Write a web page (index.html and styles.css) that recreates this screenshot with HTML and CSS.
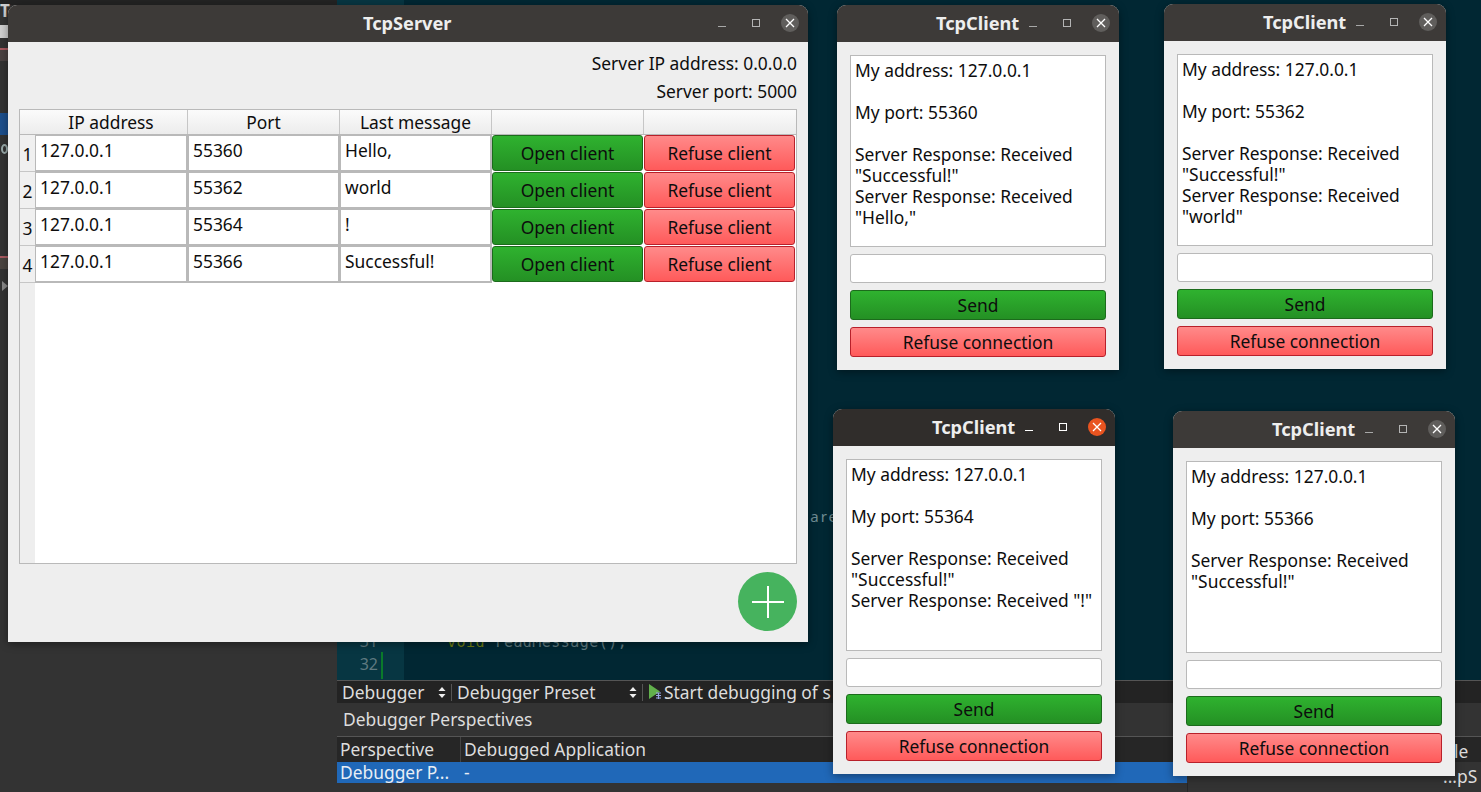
FILE: index.html
```html
<!DOCTYPE html>
<html lang="en">
<head>
<meta charset="utf-8">
<title>TcpServer</title>
<link rel="stylesheet" href="styles.css">
</head>
<body>
<div class="desktop">
  <div class="ide-left">
    <div class="top-strip"></div>
    <span class="ide-t">T</span>
    <span class="side-box"></span>
    <span class="side-red"></span>
    <span class="side-blue"></span>
    <span class="side-circle"></span>
    <span class="side-lock"></span>
    <span class="side-arrow"></span>
  </div>
  <div class="ide-right">
    <div class="editor">
      <div class="gutter"><span class="ln ln31">31</span><span class="ln ln32">32</span></div>
      <div class="code"><span class="frag">pare</span><span class="codeline"><span class="kw">void</span> readMessage();</span></div>
    </div>
    <div class="toolbar">
      <span class="combo c1"><span class="clip">Debugger</span><svg class="updown" width="8" height="11" viewBox="0 0 8 11"><path d="M4 0L7.5 4H.5ZM4 11L.5 7H7.5Z" fill="#eee"/></svg></span>
      <span class="combo c2"><span class="clip">Debugger Preset</span><svg class="updown" width="8" height="11" viewBox="0 0 8 11"><path d="M4 0L7.5 4H.5ZM4 11L.5 7H7.5Z" fill="#eee"/></svg></span>
      <svg class="play" width="13" height="16" viewBox="0 0 13 16"><path d="M0 0L11 7.5L0 15Z" fill="#62b04c"/><path d="M7 9h5M7 11.5h5M7 14h5M9.5 9v6" stroke="#9aa8e6" stroke-width="1.2"/></svg>
      <span class="clip start">Start debugging of s</span>
    </div>
    <div class="persp-title">Debugger Perspectives</div>
    <div class="persp-head"><span class="ph1">Perspective</span><span class="ph2">Debugged Application</span></div>
    <div class="persp-row"><span class="ph1">Debugger P...</span><span class="ph2">-</span></div>
    <div class="persp-foot"></div>
    <div class="far-head">le</div>
    <div class="far-row">...pS</div>
  </div>

  <section class="win server">
    <header class="bar">
      <span class="title server-title">TcpServer</span>
      <span class="ctl min"></span><span class="ctl max"></span>
      <span class="close"><svg width="10" height="10" viewBox="0 0 10 10"><path d="M1 1L9 9M9 1L1 9" stroke="#fff" stroke-width="1.3"/></svg></span>
    </header>
    <div class="server-body">
      <div class="info">Server IP address: 0.0.0.0</div>
      <div class="info">Server port: 5000</div>
      <div class="table">
        <div class="thead">
          <div class="corner"></div>
          <div class="th w-ip">IP address</div>
          <div class="th w-port">Port</div>
          <div class="th w-msg">Last message</div>
          <div class="th w-btn"></div>
          <div class="th w-btn last"></div>
        </div>
        <div class="tbody">
          <div class="vhead">
            <div class="vh">1</div><div class="vh">2</div><div class="vh">3</div><div class="vh">4</div><div class="vh-rest"></div>
          </div>
          <div class="rows">
            <div class="row"><div class="cell w-ip">127.0.0.1</div><div class="cell w-port">55360</div><div class="cell w-msg">Hello,</div><button class="btn green tb">Open client</button><button class="btn red tb">Refuse client</button></div>
            <div class="row"><div class="cell w-ip">127.0.0.1</div><div class="cell w-port">55362</div><div class="cell w-msg">world</div><button class="btn green tb">Open client</button><button class="btn red tb">Refuse client</button></div>
            <div class="row"><div class="cell w-ip">127.0.0.1</div><div class="cell w-port">55364</div><div class="cell w-msg">!</div><button class="btn green tb">Open client</button><button class="btn red tb">Refuse client</button></div>
            <div class="row"><div class="cell w-ip">127.0.0.1</div><div class="cell w-port">55366</div><div class="cell w-msg">Successful!</div><button class="btn green tb">Open client</button><button class="btn red tb">Refuse client</button></div>
          </div>
        </div>
      </div>
      <div class="fab-row">
        <span class="fab"><svg width="32" height="32" viewBox="0 0 32 32"><path d="M16 0V32M0 16H32" stroke="#fff" stroke-width="2"/></svg></span>
      </div>
    </div>
  </section>

  <section class="win client c-a">
    <header class="bar"><span class="title">TcpClient</span><span class="ctl min"></span><span class="ctl max"></span><span class="close"><svg width="10" height="10" viewBox="0 0 10 10"><path d="M1 1L9 9M9 1L1 9" stroke="#fff" stroke-width="1.3"/></svg></span></header>
    <div class="client-body">
      <div class="log">My address: 127.0.0.1<br><br>My port: 55360<br><br>Server Response: Received<br>"Successful!"<br>Server Response: Received<br>"Hello,"</div>
      <div class="input"></div>
      <button class="btn green wide">Send</button>
      <button class="btn red wide">Refuse connection</button>
    </div>
  </section>

  <section class="win client c-b">
    <header class="bar"><span class="title">TcpClient</span><span class="ctl min"></span><span class="ctl max"></span><span class="close"><svg width="10" height="10" viewBox="0 0 10 10"><path d="M1 1L9 9M9 1L1 9" stroke="#fff" stroke-width="1.3"/></svg></span></header>
    <div class="client-body">
      <div class="log">My address: 127.0.0.1<br><br>My port: 55362<br><br>Server Response: Received<br>"Successful!"<br>Server Response: Received<br>"world"</div>
      <div class="input"></div>
      <button class="btn green wide">Send</button>
      <button class="btn red wide">Refuse connection</button>
    </div>
  </section>

  <section class="win client c-c active">
    <header class="bar"><span class="title">TcpClient</span><span class="ctl min"></span><span class="ctl max"></span><span class="close"><svg width="10" height="10" viewBox="0 0 10 10"><path d="M1 1L9 9M9 1L1 9" stroke="#fff" stroke-width="1.3"/></svg></span></header>
    <div class="client-body">
      <div class="log">My address: 127.0.0.1<br><br>My port: 55364<br><br>Server Response: Received<br>"Successful!"<br>Server Response: Received "!"</div>
      <div class="input"></div>
      <button class="btn green wide">Send</button>
      <button class="btn red wide">Refuse connection</button>
    </div>
  </section>

  <section class="win client c-d">
    <header class="bar"><span class="title">TcpClient</span><span class="ctl min"></span><span class="ctl max"></span><span class="close"><svg width="10" height="10" viewBox="0 0 10 10"><path d="M1 1L9 9M9 1L1 9" stroke="#fff" stroke-width="1.3"/></svg></span></header>
    <div class="client-body">
      <div class="log">My address: 127.0.0.1<br><br>My port: 55366<br><br>Server Response: Received<br>"Successful!"</div>
      <div class="input"></div>
      <button class="btn green wide">Send</button>
      <button class="btn red wide">Refuse connection</button>
    </div>
  </section>
</div>
</body>
</html>
```
FILE: styles.css
```css
* { box-sizing: border-box; }
html, body { margin: 0; padding: 0; height: 100%; overflow: hidden; }
body { font-family: "Noto Sans", "Open Sans", sans-serif; font-size: 17.4px; color: #0d0d0d; }
.desktop { position: relative; width: 1481px; height: 792px; background: #333; overflow: hidden; }

.ide-left { position: absolute; left: 0; top: 0; width: 337px; height: 792px; background: #333; }
.top-strip { height: 5px; background: #232323; }
.ide-t { position: absolute; left: 0; top: 1px; color: #cfcfcf; font-weight: 700; font-size: 17px; line-height: 20px; }
.side-box { position: absolute; left: 0; top: 25px; width: 8px; height: 13px; background: #d0d0d0; }
.side-red { position: absolute; left: 0; top: 48px; width: 8px; height: 13px; background: #4a4242; border-top: 2px solid #a85a60; }
.side-blue { position: absolute; left: 0; top: 113px; width: 8px; height: 22px; background: #1d4f8c; }
.side-circle { position: absolute; left: 1px; top: 144px; width: 7px; height: 10px; border-radius: 50%; border: 2px solid #9aa; }
.side-lock { position: absolute; left: 0; top: 256px; width: 8px; height: 13px; background: #4a4440; border-top: 2px solid #a85a60; }
.side-arrow { position: absolute; left: 2px; top: 281px; border-left: 6px solid #888; border-top: 5px solid transparent; border-bottom: 5px solid transparent; }

.ide-right { position: absolute; left: 337px; top: 0; width: 1144px; height: 792px; display: flex; flex-direction: column; background: #333; }
.editor { height: 681px; flex: none; display: flex; background: #012733; border-bottom: 1px solid #555; position: relative; }
.gutter { width: 67px; background: #073642; position: relative; }
.ln { position: absolute; right: 26px; color: #5f7a80; font-size: 16px; line-height: 22px; }
.ln31 { top: 630px; }
.ln32 { top: 653px; }
.ln32::after { content: ""; position: absolute; left: 21px; top: -1px; width: 2px; height: 27px; background: #0a7a2a; }
.code { flex: 1; position: relative; }
.frag { position: absolute; left: 395px; top: 506px; color: #6f8b92; font-size: 15px; letter-spacing: 2px; }
.codeline { position: absolute; left: 43px; top: 633px; color: #5f7a80; font-size: 15px; font-family: "DejaVu Sans Mono", monospace; letter-spacing: .45px; }
.kw { color: #6b7a12; }
.toolbar { height: 22px; flex: none; background: #232323; display: flex; align-items: center; color: #ddd; white-space: nowrap; }
.combo { display: flex; align-items: center; justify-content: space-between; padding: 0 5px; height: 17px; border-right: 1px solid #555; flex: none; }
.clip { display: block; line-height: 17px; }
.c1 { width: 115px; }
.c2 { width: 191px; }
.play { margin-left: 6px; flex: none; }
.start { margin-left: 2px; }
.persp-title { height: 34px; flex: none; color: #ddd; padding: 0 6px; line-height: 33px; border-bottom: 1px solid #555; }
.persp-head { height: 25px; flex: none; background: #262626; color: #ddd; display: flex; line-height: 24px; }
.persp-row { height: 21px; flex: none; background: #2068b8; color: #e8eef5; display: flex; line-height: 21px; width: 850px; }
.persp-foot { height: 9px; flex: none; width: 851px; border-right: 1px solid #262626; }
.ph1 { width: 124px; padding-left: 3px; border-right: 1px solid #444; white-space: nowrap; }
.persp-row .ph1 { border-right: 0; }
.ph2 { padding-left: 3px; }
.far-head { position: absolute; left: 1117px; top: 739px; color: #ddd; }
.far-row { position: absolute; left: 1106px; top: 764px; color: #ddd; white-space: nowrap; }

.win { position: absolute; display: flex; flex-direction: column; border-radius: 9px 9px 0 0; background: #eee; box-shadow: 0 2px 8px rgba(0,0,0,.4); }
.bar { height: 37px; background: #3d3a38; border-radius: 9px 9px 0 0; position: relative; flex: none; }
.active .bar { background: #302d2b; }
.title { position: absolute; top: 8px; color: #eee; font-weight: 700; font-size: 18.2px; line-height: 21px; }
.ctl { position: absolute; }
.ctl.min { width: 8px; height: 1px; background: #a8a8a8; top: 21px; }
.ctl.max { width: 8px; height: 8px; border: 1px solid #b4b4b4; top: 14px; }
.close { position: absolute; top: 9px; width: 18px; height: 18px; border-radius: 50%; background: #605e5c; display: flex; align-items: center; justify-content: center; }
.active .close { background: #e95420; }
.active .ctl.max { border-color: #fff; }
.active .ctl.min { background: #fff; }

.server { left: 8px; top: 5px; width: 800px; height: 637px; }
.server-title { left: 355px; }
.server .ctl.min { left: 710px; }
.server .ctl.max { left: 744px; }
.server .close { left: 773px; }
.server-body { flex: 1; display: flex; flex-direction: column; padding: 7px 11px 0 11px; }
.info { text-align: right; height: 28px; line-height: 28px; }
.table { margin-top: 4px; width: 778px; height: 455px; border: 1px solid #b9b9b9; background: #fff; display: flex; flex-direction: column; flex: none; }
.thead { height: 25px; display: flex; background: linear-gradient(#fbfbfb, #ececec); border-bottom: 1px solid #b9b9b9; flex: none; }
.corner { width: 15px; }
.th { line-height: 25px; text-align: center; border-right: 1px solid #c6c6c6; }
.th.w-ip { width: 153px; }
.th.w-port, .th.w-msg, .th.w-btn { width: 152px; }
.th.last { border-right: 0; }
.tbody { flex: 1; display: flex; min-height: 0; }
.vhead { width: 15px; display: flex; flex-direction: column; background: #eee; flex: none; }
.vh { height: 37px; line-height: 38px; text-align: center; border-bottom: 1px solid #c6c6c6; background: #f0f0f0; }
.vh-rest { flex: 1; }
.rows { flex: 1; display: flex; flex-direction: column; }
.row { display: flex; height: 37px; }
.cell { height: 37px; border: 1px solid #b9b9b9; border-width: 1px 2px 2px 1px; padding: 0 4px; line-height: 29px; background: #fff; }
.cell.w-ip { width: 153px; }
.cell.w-port, .cell.w-msg { width: 152px; }
.btn { display: block; font: inherit; color: #0d0d0d; padding: 0; text-align: center; border-radius: 3px; }
.green { background: linear-gradient(#2fb22f, #249024); border: 1px solid #1c6b1c; }
.red { background: linear-gradient(#ff8a8a, #ff5a5a); border: 1px solid #b8202a; }
.tb { width: 151px; height: 36px; margin-right: 1px; }
.fab-row { display: flex; justify-content: flex-end; padding-top: 8px; }
.fab { width: 59px; height: 59px; border-radius: 50%; background: #46b35e; display: flex; align-items: center; justify-content: center; }

.client { width: 282px; height: 365px; }
.client .title { left: 99px; }
.client .ctl.min { left: 192px; }
.client .ctl.max { left: 226px; }
.client .close { left: 255px; }
.client-body { flex: 1; display: flex; flex-direction: column; padding: 13px 13px 0 13px; }
.log { height: 192px; background: #fff; border: 1px solid #b9b9b9; padding: 4px 4px; line-height: 21px; white-space: nowrap; }
.input { height: 29px; margin-top: 7px; background: #fff; border: 1px solid #b9b9b9; border-radius: 3px; }
.wide { height: 30px; margin-top: 7px; width: 100%; }
.c-a { left: 837px; top: 5px; }
.c-b { left: 1164px; top: 4px; }
.c-c { left: 833px; top: 409px; }
.c-d { left: 1173px; top: 411px; }
```
